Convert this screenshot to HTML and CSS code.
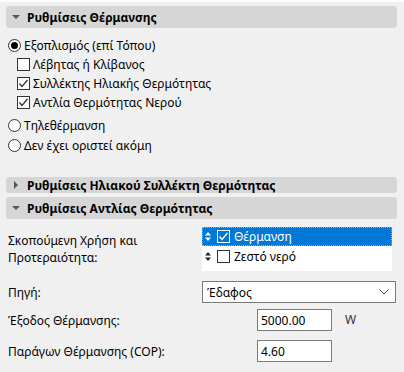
FILE: index.html
```html
<!DOCTYPE html>
<html lang="el">

<head>
    <meta charset="UTF-8">
    <title>Ρυθμίσεις Θέρμανσης</title>
    <link rel="stylesheet" href="styles.css">
</head>

<body>
    <div class="panel">
        <div class="section-head">
            <span class="tri tri--down"></span>
            Ρυθμίσεις Θέρμανσης
        </div>

        <div class="options">
            <div class="opt">
                <span class="radio radio--on"></span>
                Εξοπλισμός (επί Τόπου)
            </div>
            <div class="sub">
                <div class="opt opt--sub">
                    <span class="check"></span>
                    Λέβητας ή Κλίβανος
                </div>
                <div class="opt opt--sub">
                    <span class="check">
                        <svg viewBox="0 0 11 11" width="11" height="11"><polyline points="1.5,5.5 4,8.5 9.5,2" /></svg>
                    </span>
                    Συλλέκτης Ηλιακής Θερμότητας
                </div>
                <div class="opt opt--sub">
                    <span class="check">
                        <svg viewBox="0 0 11 11" width="11" height="11"><polyline points="1.5,5.5 4,8.5 9.5,2" /></svg>
                    </span>
                    Αντλία Θερμότητας Νερού
                </div>
            </div>
            <div class="opt">
                <span class="radio"></span>
                Τηλεθέρμανση
            </div>
            <div class="opt">
                <span class="radio"></span>
                Δεν έχει οριστεί ακόμη
            </div>
        </div>

        <div class="section-head section-head--thin">
            <span class="tri tri--right"></span>
            Ρυθμίσεις Ηλιακού Συλλέκτη Θερμότητας
        </div>
        <div class="section-head section-head--gap">
            <span class="tri tri--down"></span>
            Ρυθμίσεις Αντλίας Θερμότητας
        </div>

        <div class="form">
            <div class="row row--list">
                <div class="label label--top">Σκοπούμενη Χρήση και<br>Προτεραιότητα:</div>
                <div class="listbox">
                    <div class="list-item list-item--sel">
                        <svg class="updown" viewBox="0 0 6 9" width="6" height="9"><polygon points="0,3.5 3,0 6,3.5" /><polygon points="0,5.5 6,5.5 3,9" /></svg>
                        <span class="check check--sel">
                            <svg viewBox="0 0 11 11" width="11" height="11"><polyline points="1.5,5.5 4,8.5 9.5,2" /></svg>
                        </span>
                        Θέρμανση
                    </div>
                    <div class="list-item">
                        <svg class="updown" viewBox="0 0 6 9" width="6" height="9"><polygon points="0,3.5 3,0 6,3.5" /><polygon points="0,5.5 6,5.5 3,9" /></svg>
                        <span class="check"></span>
                        Ζεστό νερό
                    </div>
                </div>
            </div>

            <div class="row row--select">
                <div class="label">Πηγή:</div>
                <div class="select">
                    Έδαφος
                    <svg class="chevron" viewBox="0 0 10 6" width="10" height="6"><polyline points="0.5,0.5 5,5 9.5,0.5" /></svg>
                </div>
            </div>

            <div class="row row--input">
                <div class="label">Έξοδος Θέρμανσης:</div>
                <div class="field">5000.00</div>
                <div class="unit">W</div>
            </div>

            <div class="row row--input">
                <div class="label">Παράγων Θέρμανσης (COP):</div>
                <div class="field">4.60</div>
            </div>
        </div>
    </div>
</body>
</html>
```

FILE: styles.css
```css
body {
    margin: 0;
    background-color: #f0f0f0;
    font-family: 'Noto Sans', 'Open Sans', sans-serif;
    font-size: 12px;
    color: #000000;
}

.panel {
    border-top: 2px solid #fbfbfb;
    padding: 4px 7px 0 6px;
}

.section-head {
    display: flex;
    align-items: center;
    gap: 6px;
    height: 22px;
    padding-left: 5px;
    background-color: #d6d6d6;
    border-radius: 3px;
    font-weight: bold;
}

.section-head--thin {
    height: 16px;
    margin-top: 22px;
}

.section-head--gap {
    margin-top: 4px;
}

/* triangles of the collapsible heads */
.tri {
    width: 10px;
    display: flex;
    justify-content: center;
}

.tri::before {
    content: "";
    border-style: solid;
    border-color: transparent;
}

.tri--down::before {
    border-width: 4px 4px 0 4px;
    border-top-color: #555555;
}

.tri--right::before {
    border-width: 4px 0 4px 4px;
    border-left-color: #555555;
}

.options {
    margin-top: 7px;
    display: flex;
    flex-direction: column;
}

.opt {
    display: flex;
    align-items: center;
    gap: 3px;
    height: 20px;
    padding-left: 2px;
}

.sub {
    margin-bottom: 3px;
}

.opt--sub {
    height: 19px;
    padding-left: 11px;
}

.radio {
    width: 11px;
    height: 11px;
    border: 1px solid #333333;
    border-radius: 50%;
    background-color: #ffffff;
    display: flex;
    align-items: center;
    justify-content: center;
}

.radio--on::after {
    content: "";
    width: 7px;
    height: 7px;
    border-radius: 50%;
    background-color: #000000;
}

.check {
    width: 11px;
    height: 11px;
    border: 1px solid #333333;
    background-color: #ffffff;
    display: flex;
    align-items: center;
    justify-content: center;
    flex-shrink: 0;
}

.check svg {
    fill: none;
    stroke: #333333;
    stroke-width: 1.3;
}

.check--sel {
    border-color: #ffffff;
    background-color: transparent;
}

.check--sel svg {
    stroke: #ffffff;
}

.form {
    margin-top: 8px;
    padding-left: 2px;
    display: flex;
    flex-direction: column;
}

.row {
    display: flex;
    align-items: center;
}

.label {
    width: 194px;
    flex-shrink: 0;
}

.row--list {
    align-items: flex-start;
}

.label--top {
    padding-top: 5px;
    line-height: 17px;
}

.listbox {
    width: 190px;
    height: 44px;
    background-color: #ffffff;
}

.list-item {
    display: flex;
    align-items: center;
    height: 20px;
    padding-left: 3px;
    gap: 0;
}

.list-item .check {
    margin: 0 4px 0 6px;
}

.list-item--sel {
    height: 19px;
    background-color: #0078d7;
    color: #ffffff;
    outline: 1px dotted #f0a030;
    outline-offset: -1px;
}

.updown {
    fill: #222222;
}

.list-item--sel .updown {
    fill: #ffffff;
}

.row--select {
    margin-top: 10px;
}

.select {
    width: 182px;
    height: 20px;
    border: 1px solid #7a7a7a;
    background-color: #ffffff;
    display: flex;
    align-items: center;
    justify-content: space-between;
    padding: 0 6px 0 4px;
    box-sizing: content-box;
}

.chevron {
    fill: none;
    stroke: #444444;
    stroke-width: 1;
}

.row--input {
    margin-top: 6px;
}

.row--input + .row--input {
    margin-top: 9px;
}

.row--input .label {
    width: 249px;
}

.field {
    width: 70px;
    height: 20px;
    border: 1px solid #7a7a7a;
    background-color: #ffffff;
    padding-left: 3px;
    display: flex;
    align-items: center;
}

.unit {
    margin-left: 13px;
    margin-top: -2px;
    color: #333333;
}
```
